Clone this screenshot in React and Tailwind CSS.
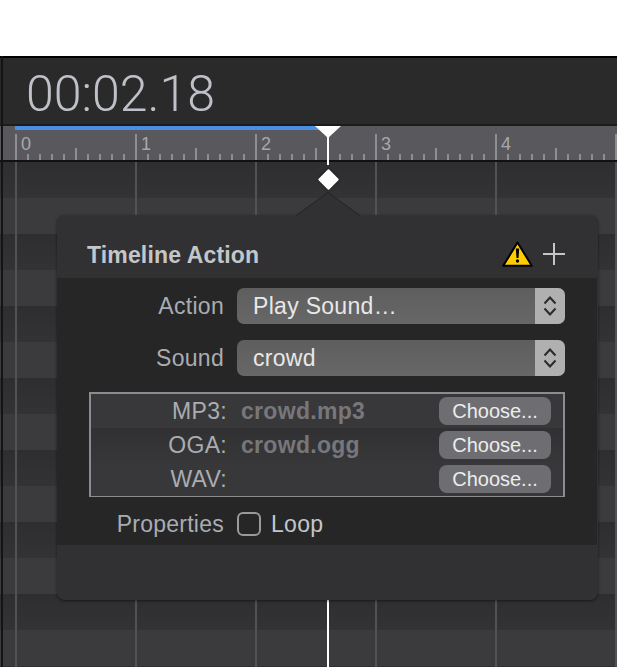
import React from 'react';

const sans = 'font-["Liberation_Sans",Arial,sans-serif]';

const Ruler = () => (
  <div className="relative h-[34px] bg-[#58585d] pl-[15px] flex">
    {/* progress bar */}
    <div className="absolute left-[15px] top-0 h-[4px] w-[304px] bg-[#4a90e2]"></div>
    {[0, 1, 2, 3, 4, 5].map((n) => (
      <div key={n} className="relative w-[120px] shrink-0 border-l-2 border-[#8f8f93] mt-[8px] flex items-end">
        <span className="absolute left-[4px] top-0 text-[18px] leading-5 text-[#a8a8ac]">{n < 5 ? n : ''}</span>
        {[1, 2, 3, 4, 5, 6, 7, 8, 9].map((t) => (
          <div key={t} className="w-[12px] flex justify-end">
            <div className={t === 5 ? 'w-[2px] h-[12px] bg-[#8f8f93]' : 'w-[2px] h-[6px] bg-[#8f8f93]'}></div>
          </div>
        ))}
      </div>
    ))}
  </div>
);

const Track = () => (
  <div className="relative flex-1 bg-[#303033] overflow-hidden">
    <div className="absolute inset-0 flex flex-col">
      {[0, 1, 2, 3, 4, 5, 6, 7, 8, 9, 10, 11, 12, 13].map((r) => (
        <div key={r} className={r % 2 === 1 ? 'h-[36px] shrink-0 bg-[#3b3b3e]' : 'h-[36px] shrink-0 bg-gradient-to-b from-[#2e2e30] to-[#333336]'}></div>
      ))}
    </div>
    <div className="relative h-full flex pl-[15px]">
      {[0, 1, 2, 3, 4, 5].map((n) => (
        <div key={n} className="w-[120px] shrink-0 border-l-2 border-[#525256]"></div>
      ))}
    </div>
  </div>
);

const SelectBox = ({ value }) => (
  <div className="w-[328px] h-[36px] rounded-[7px] overflow-hidden flex bg-gradient-to-b from-[#5e5e5e] to-[#676767]">
    <span className="flex-1 pl-[16px] text-[23px] tracking-[0.3px] leading-[36px] text-[#e8e8e8]">{value}</span>
    <div className="w-[30px] bg-[#b0b0b0] flex items-center justify-center">
      <svg width="14" height="24" viewBox="0 0 14 24" fill="none" stroke="#2a2a2a" strokeWidth="2">
        <path d="M1.500 9.500 7 3.500 12.500 9.500" />
        <path d="M1.500 14.500 7 20.500 12.500 14.500" />
      </svg>
    </div>
  </div>
);

const FileRow = ({ label, file, bg }) => (
  <div className={`h-[34px] flex items-center ${bg}`}>
    <span className="w-[136px] text-right text-[23px] tracking-[0.3px] text-[#a9adb1]">{label}</span>
    <span className="w-[212px] pl-[14px] text-[23px] tracking-[0.3px] font-bold text-[#77777a]">{file}</span>
    <button className="w-[112px] h-[28px] rounded-[8px] bg-[#6e6e72] text-[20px] leading-[28px] text-[#ececec]">Choose...</button>
  </div>
);

const Popover = () => (
  <div className="absolute left-[57px] top-[215px] w-[541px] h-[385px] rounded-[8px] bg-[#313134] shadow-[0_1px_3px_rgba(0,0,0,0.5)] flex flex-col">
    {/* arrow up to the playhead */}
    <svg className="absolute left-[238px] top-[-23px]" width="66" height="24" viewBox="0 0 66 24">
      <path d="M1 23.500 33 .5 65 23.500Z" fill="#313134" />
      <path d="M1 23.500 33 .5 65 23.500" fill="none" stroke="#232325" strokeWidth="1" />
    </svg>
    <div className="h-[63px] pl-[30px] pr-[33px] pt-[14px] flex items-center justify-between">
      <span className="mt-[4px] text-[23px] tracking-[0.15px] font-bold text-[#c3c7ca]">Timeline Action</span>
      <div className="flex items-center gap-[10px]">
        <svg width="31" height="26" viewBox="0 0 31 26">
          <path d="M15.500 1.500 29.800 24.800H1.200Z" fill="#ffcc00" stroke="#000" strokeWidth="2" strokeLinejoin="round" />
          <path d="M13.800 7.500h3.400l-.7 9.500h-2Z" fill="#000" />
          <circle cx="15.500" cy="20" r="1.700" fill="#000" />
        </svg>
        <svg width="22" height="22" viewBox="0 0 22 22" stroke="#c3c7ca" strokeWidth="2">
          <path d="M11 0v22M0 11h22" />
        </svg>
      </div>
    </div>
    <div className="w-[540px] h-[267px] bg-[#262627] flex flex-col pt-[10px]">
      <div className="flex items-center gap-[13px]">
        <span className="w-[167px] text-right text-[23px] tracking-[0.3px] text-[#a9adb1]">Action</span>
        <SelectBox value="Play Sound…" />
      </div>
      <div className="flex items-center gap-[13px] mt-[16px]">
        <span className="w-[167px] text-right text-[23px] tracking-[0.3px] text-[#a9adb1]">Sound</span>
        <SelectBox value="crowd" />
      </div>
      <div className="ml-[32px] mt-[16px] w-[476px] h-[105px] border-2 border-[#8a8d90] bg-[#38383b]">
        <FileRow label="MP3:" file="crowd.mp3" bg="bg-[#38383b]" />
        <FileRow label="OGA:" file="crowd.ogg" bg="bg-gradient-to-b from-[#313134] to-[#37373a]" />
        <FileRow label="WAV:" file="" bg="bg-[#38383b]" />
      </div>
      <div className="flex items-center gap-[13px] mt-[10px]">
        <span className="w-[167px] text-right text-[23px] tracking-[0.25px] text-[#a9adb1]">Properties</span>
        <div className="w-[24px] h-[24px] rounded-[6px] border-2 border-[#9a9a9d]"></div>
        <span className="-ml-[3px] text-[23px] tracking-[0.3px] text-[#c3c7ca]">Loop</span>
      </div>
    </div>
  </div>
);

export default function App() {
  return (
    <div className={`relative w-[617px] h-[667px] overflow-hidden bg-white flex flex-col ${sans}`}>
      <div className="h-[56px] shrink-0"></div>
      <div className="flex-1 flex flex-col border-t-2 border-black bg-[#2a2a2b]">
        <div className="h-[66px] shrink-0 bg-[#2a2a2b] pl-[26px] pt-[6px] flex items-center">
          <span className="font-['Roboto'] font-light text-[50px] leading-none text-[#bec2c8]">00:02.18</span>
        </div>
        <div className="h-[2px] shrink-0 bg-[#1c1c1c]"></div>
        <Ruler />
        <div className="h-[2px] shrink-0 bg-[#111]"></div>
        <Track />
      </div>
      {/* left edge */}
      <div className="absolute left-[1px] top-[56px] bottom-0 w-[2px] bg-[#141414]"></div>
      {/* playhead */}
      <div className="absolute left-[327px] top-[126px] h-[39px] w-[2px] bg-white"></div>
      <div className="absolute left-[327px] top-[600px] bottom-0 w-[2px] bg-white"></div>
      <svg className="absolute left-[315px] top-[126px]" width="26" height="12" viewBox="0 0 26 12">
        <path d="M0 0h26L13 12Z" fill="#fff" />
      </svg>
      <Popover />
      <div className="absolute left-[320.500px] top-[171.500px] w-[15px] h-[15px] rotate-45 bg-white rounded-[1px] shadow-[0_0_3px_rgba(0,0,0,0.6)]"></div>
    </div>
  );
}
